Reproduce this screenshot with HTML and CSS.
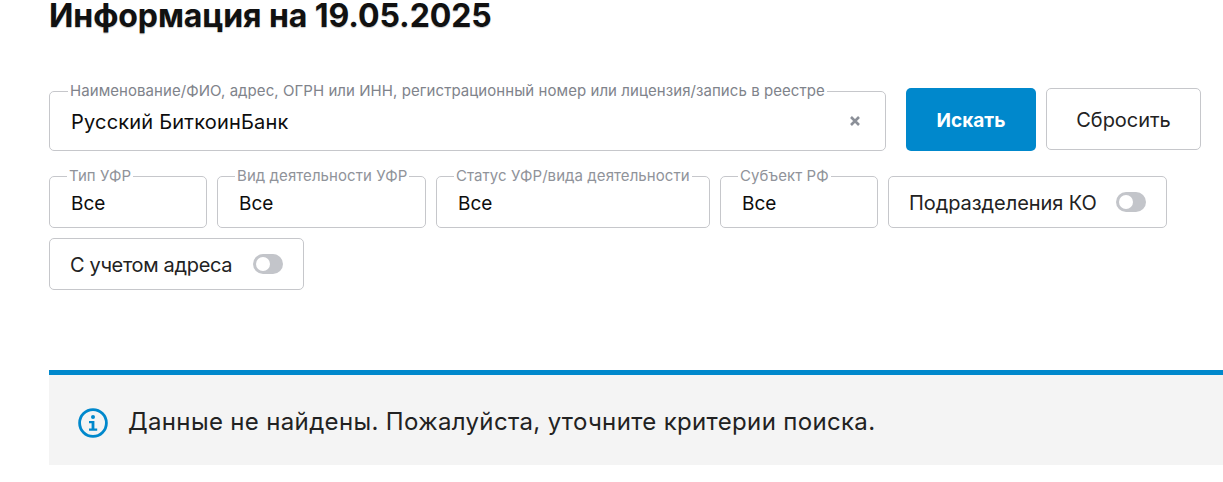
FILE: index.html
```html
<!DOCTYPE html>
<html lang="ru">
<head>
<meta charset="utf-8">
<title>Информация</title>
<link rel="stylesheet" href="styles.css">
</head>
<body>
<main class="page">
  <h1 class="title">Информация на 19.05.2025</h1>
  <form class="search">
    <fieldset class="field field-main">
      <legend>Наименование/ФИО, адрес, ОГРН или ИНН, регистрационный номер или лицензия/запись в реестре</legend>
      <span class="value value-main">Русский БиткоинБанк</span>
      <svg class="clear" width="10" height="10" viewBox="0 0 10 10"><path d="M1 1l8 8M9 1l-8 8" stroke="#8b8f98" stroke-width="2.6" fill="none"/></svg>
    </fieldset>
    <button type="button" class="btn btn-primary">Искать</button>
    <button type="button" class="btn btn-reset">Сбросить</button>
  </form>
  <div class="filters">
    <fieldset class="field small w-type"><legend>Тип УФР</legend><span class="value">Все</span></fieldset>
    <fieldset class="field small w-kind"><legend>Вид деятельности УФР</legend><span class="value">Все</span></fieldset>
    <fieldset class="field small w-status"><legend>Статус УФР/вида деятельности</legend><span class="value">Все</span></fieldset>
    <fieldset class="field small w-type"><legend>Субъект РФ</legend><span class="value">Все</span></fieldset>
    <div class="toggle-box w-ko"><span>Подразделения КО</span><i class="toggle"></i></div>
    <div class="toggle-box w-addr"><span>С учетом адреса</span><i class="toggle"></i></div>
  </div>
  <section class="notice">
    <svg class="info" width="30" height="30" viewBox="0 0 30 30"><circle cx="15" cy="15" r="13.4" fill="none" stroke="#0088cc" stroke-width="2.8"/><circle cx="15" cy="9" r="2" fill="#0088cc"/><path d="M11 13h5.4v7.4h2.8v2.3h-8.2v-2.3h2.6v-5.1h-2.6z" fill="#0088cc"/></svg>
    <p>Данные не найдены. Пожалуйста, уточните критерии поиска.</p>
  </section>
</main>
</body>
</html>
```
FILE: styles.css
```css
* { box-sizing: border-box; }
html, body { margin: 0; padding: 0; background: #fff; overflow: hidden; }
body { font-family: Inter, "Noto Sans", sans-serif; color: #1a1a1a; height: 482px; }
.page { padding-left: 49px; }
.title { margin: 0; height: 84px; font-size: 32px; line-height: 32px; font-weight: 700; color: #111; letter-spacing: -0.08px; text-shadow: 0 1px 1px rgba(0, 0, 0, 0.22); }
.search { display: flex; align-items: flex-start; height: 85px; }
.field { margin: 0; border: 1px solid #c6c7cb; border-radius: 5px; background: #fff; min-width: 0; position: relative; }
.field legend { padding: 0 2px; margin-left: -4px; font-size: 15px; line-height: 14px; color: #90939a; letter-spacing: 0.07px; white-space: nowrap; }
.field-main legend { margin-left: -3px; letter-spacing: 0.065px; color: #80838b; }
.field-main { width: 837px; height: 67px; padding: 0 0 0 21px; margin-right: 20px; }
.value { display: block; font-size: 19px; line-height: 26px; color: #0d0d0d; margin-top: 8px; }
.value-main { font-size: 20px; letter-spacing: 0.2px; margin-top: 11px; }
.clear { position: absolute; right: 25px; top: 18px; }
.btn { font: inherit; font-size: 19px; border-radius: 5px; cursor: pointer; margin-top: 4px; padding: 2px 0 0; }
.btn-primary { width: 130px; height: 63px; background: #0088cc; color: #fff; font-weight: 700; border: 0; margin-right: 10px; }
.btn-reset { width: 155px; height: 62px; background: #fff; border: 1px solid #c6c7cb; color: #222; font-size: 20px; letter-spacing: -0.05px; }
.filters { display: flex; flex-wrap: wrap; gap: 10px; width: 1130px; height: 201px; align-content: flex-start; }
.small { height: 59px; padding: 0 0 0 21px; }
.w-type { width: 158px; }
.w-kind { width: 209px; }
.w-status { width: 274px; }
.toggle-box { height: 52px; margin-top: 7px; border: 1px solid #c6c7cb; border-radius: 5px; display: flex; align-items: center; justify-content: space-between; padding: 0 20px; font-size: 20px; color: #222; }
.toggle-box span { margin-top: 2px; }
.w-ko { width: 279px; letter-spacing: -0.06px; }
.w-addr { width: 255px; margin-top: 0; letter-spacing: -0.33px; }
.toggle { width: 30px; height: 20px; border-radius: 10px; background: #c3c5ca; position: relative; display: block; }
.toggle::after { content: ""; position: absolute; left: 3px; top: 3px; width: 14px; height: 14px; border-radius: 50%; background: #fff; }
.notice { display: flex; align-items: center; height: 95px; border-top: 5px solid #0088cc; background: #f4f4f4; padding: 4px 0 0 29px; gap: 20px; }
.notice p { margin: 0; font-size: 24px; line-height: 32px; color: #222; letter-spacing: 0.34px; }
.info { flex: none; margin-top: 2px; }
```
